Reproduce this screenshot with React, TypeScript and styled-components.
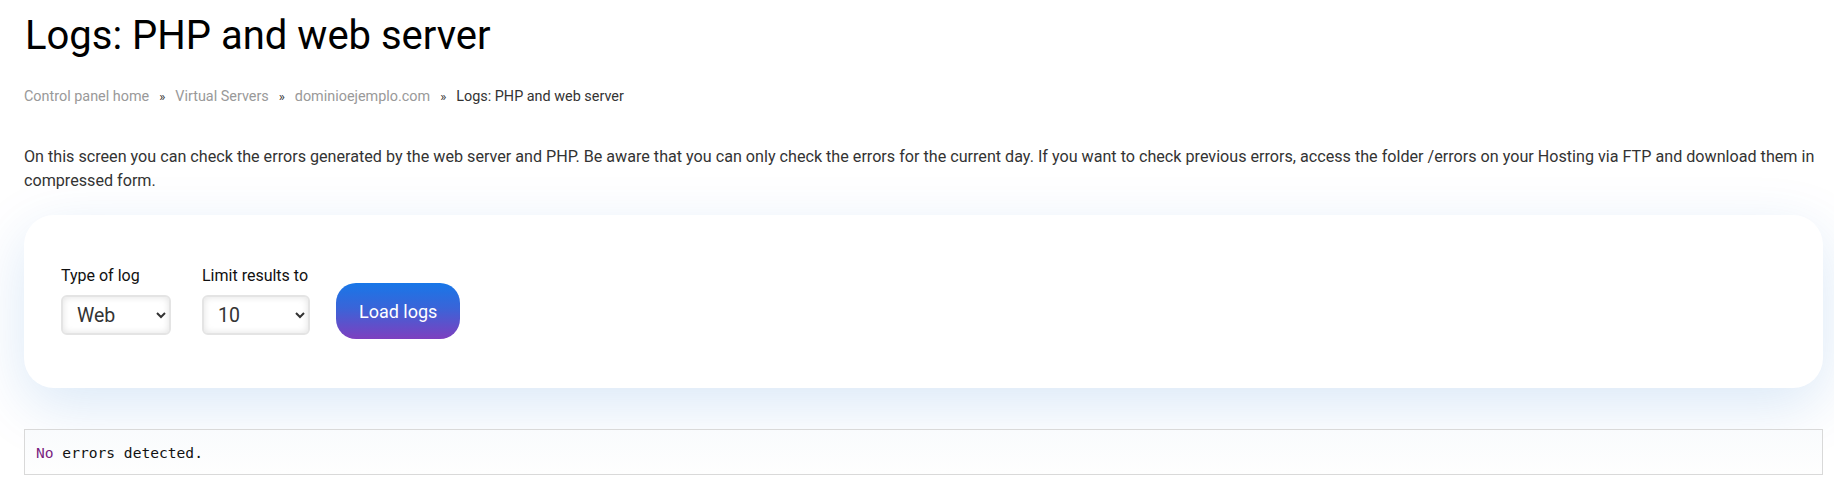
import styled, { createGlobalStyle } from "styled-components";

const GlobalStyle = createGlobalStyle`
  html, body {
    margin: 0;
    padding: 0;
    background: #ffffff;
    font-family: Roboto, "Liberation Sans", Arial, sans-serif;
    color: #333333;
  }
`;

const Page = styled.div`
  padding: 8px 11px 20px 24px;
`;

const Title = styled.h1`
  margin: 0;
  font-size: 40px;
  font-weight: 400;
  line-height: 56px;
  color: #000000;
  margin-left: 1px;
`;

const Breadcrumb = styled.nav`
  display: flex;
  align-items: center;
  margin-top: 23px;
  font-size: 14.4px;
  line-height: 20px;
`;

const Crumb = styled.a<{ $current?: boolean }>`
  color: ${(p) => (p.$current ? "#333333" : "#999999")};
  text-decoration: none;
`;

const Sep = styled.span`
  margin: 0 10px;
  color: #333333;
  font-size: 13px;
`;

const Intro = styled.p`
  margin: 38px 0 0;
  font-size: 16.15px;
  line-height: 23.5px;
  color: #333333;
`;

const Card = styled.section`
  margin-top: 23px;
  background: #ffffff;
  border-radius: 30px;
  box-shadow: 0 18px 60px rgba(0, 100, 200, 0.15);
  padding: 51px 37px 49px;
  display: flex;
  align-items: flex-start;
  gap: 26px;
`;

const Field = styled.div<{ $extra?: number }>`
  display: flex;
  flex-direction: column;
  margin-right: ${(p) => p.$extra ?? 0}px;
`;

const Label = styled.label`
  font-size: 16px;
  line-height: 19px;
  color: #111111;
  margin-bottom: 10px;
`;

const Select = styled.select<{ $w: number }>`
  width: ${(p) => p.$w}px;
  height: 40px;
  box-sizing: border-box;
  border: 2px solid #e4e4e4;
  border-radius: 6px;
  background: #ffffff;
  box-shadow: inset 0 0 7px rgba(0, 0, 0, 0.12);
  padding: 0 6px 0 10px;
  font-family: Roboto, "Liberation Sans", Arial, sans-serif;
  font-size: 19.5px;
  color: #333333;
  outline: none;
`;

const LoadButton = styled.button`
  margin-top: 17px;
  height: 56px;
  padding: 0 23px;
  border: none;
  border-radius: 20px;
  background: linear-gradient(180deg, #1877e8 0%, #3a64d8 45%, #7e3fbf 100%);
  color: #ffffff;
  font-family: Roboto, "Liberation Sans", Arial, sans-serif;
  font-size: 18px;
  cursor: pointer;
`;

const LogBox = styled.pre`
  margin: 41px 0 0;
  border: 1px solid #d9d9d9;
  background: linear-gradient(180deg, #f9fbfd 0%, #fefefe 100%);
  padding: 12px 11px 11px;
  font-family: "DejaVu Sans Mono", "Liberation Mono", monospace;
  font-size: 14.6px;
  line-height: 21px;
  color: #111111;
`;

const Keyword = styled.span`
  color: #7a1f80;
`;

export default function App() {
  return (
    <>
      <GlobalStyle />
      <Page>
        <Title>Logs: PHP and web server</Title>
        <Breadcrumb>
          <Crumb href="#">Control panel home</Crumb>
          <Sep>»</Sep>
          <Crumb href="#">Virtual Servers</Crumb>
          <Sep>»</Sep>
          <Crumb href="#">dominioejemplo.com</Crumb>
          <Sep>»</Sep>
          <Crumb $current>Logs: PHP and web server</Crumb>
        </Breadcrumb>
        <Intro>
          On this screen you can check the errors generated by the web server and PHP. Be aware that you can only
          check the errors for the current day. If you want to check previous errors, access the folder /errors on
          your Hosting via FTP and download them in compressed form.
        </Intro>
        <Card>
          <Field $extra={5}>
            <Label htmlFor="logtype">Type of log</Label>
            <Select id="logtype" $w={110} defaultValue="web">
              <option value="web">Web</option>
              <option value="php">PHP</option>
            </Select>
          </Field>
          <Field>
            <Label htmlFor="limit">Limit results to</Label>
            <Select id="limit" $w={108} defaultValue="10">
              <option value="10">10</option>
              <option value="50">50</option>
              <option value="100">100</option>
            </Select>
          </Field>
          <LoadButton type="button">Load logs</LoadButton>
        </Card>
        <LogBox>
          <Keyword>No</Keyword> errors detected.
        </LogBox>
      </Page>
    </>
  );
}
